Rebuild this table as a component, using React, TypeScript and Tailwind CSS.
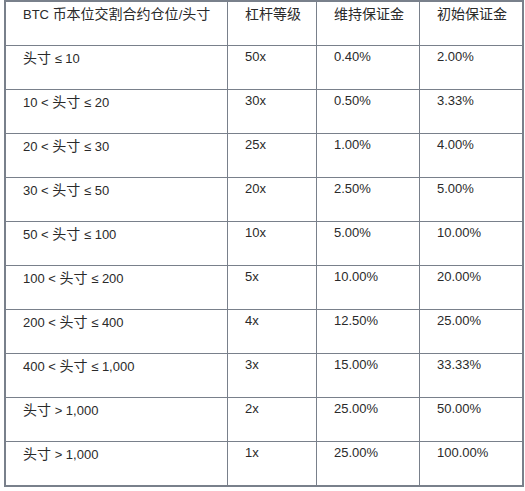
const HEAD = ['杠杆等级', '维持保证金', '初始保证金'];

const ROWS: [string, string, string, string, string][] = [
  ['', '≤ 10', '50x', '0.40%', '2.00%'],
  ['10 < ', '≤ 20', '30x', '0.50%', '3.33%'],
  ['20 < ', '≤ 30', '25x', '1.00%', '4.00%'],
  ['30 < ', '≤ 50', '20x', '2.50%', '5.00%'],
  ['50 < ', '≤ 100', '10x', '5.00%', '10.00%'],
  ['100 < ', '≤ 200', '5x', '10.00%', '20.00%'],
  ['200 < ', '≤ 400', '4x', '12.50%', '25.00%'],
  ['400 < ', '≤ 1,000', '3x', '15.00%', '33.33%'],
  ['', '> 1,000', '2x', '25.00%', '50.00%'],
  ['', '> 1,000', '1x', '25.00%', '100.00%'],
];

const cjk = 'text-[14px] [font-family:"Noto_Sans_CJK_SC",sans-serif]';
const cell = 'h-[43px] pl-[17px] pt-[1px] leading-[20px] border-l border-[#79808b] first:border-l-0';

export default function App() {
  return (
    <div className="bg-white w-[525px] h-[491px] text-[13px] text-[#2a2a2a] [font-family:'Liberation_Sans','Noto_Sans_CJK_SC',sans-serif]">
      <div className="ml-[4px] w-[520px] border-2 border-[#79808b]">
        <div className="grid grid-cols-[221px_89px_103px_103px]">
          <div className={cell}>
            BTC <span className={cjk}>币本位交割合约仓位</span>/<span className={cjk}>头寸</span>
          </div>
          {HEAD.map((h) => (
            <div key={h} className={cell}>
              <span className={cjk}>{h}</span>
            </div>
          ))}
        </div>
        {ROWS.map((r, i) => (
          <div key={i} className="grid grid-cols-[221px_89px_103px_103px] border-t border-[#79808b]">
            <div className={cell}>
              {r[0]}
              <span className={cjk}>头寸</span> {r[1]}
            </div>
            <div className={cell}>{r[2]}</div>
            <div className={cell}>{r[3]}</div>
            <div className={cell}>{r[4]}</div>
          </div>
        ))}
      </div>
    </div>
  );
}
